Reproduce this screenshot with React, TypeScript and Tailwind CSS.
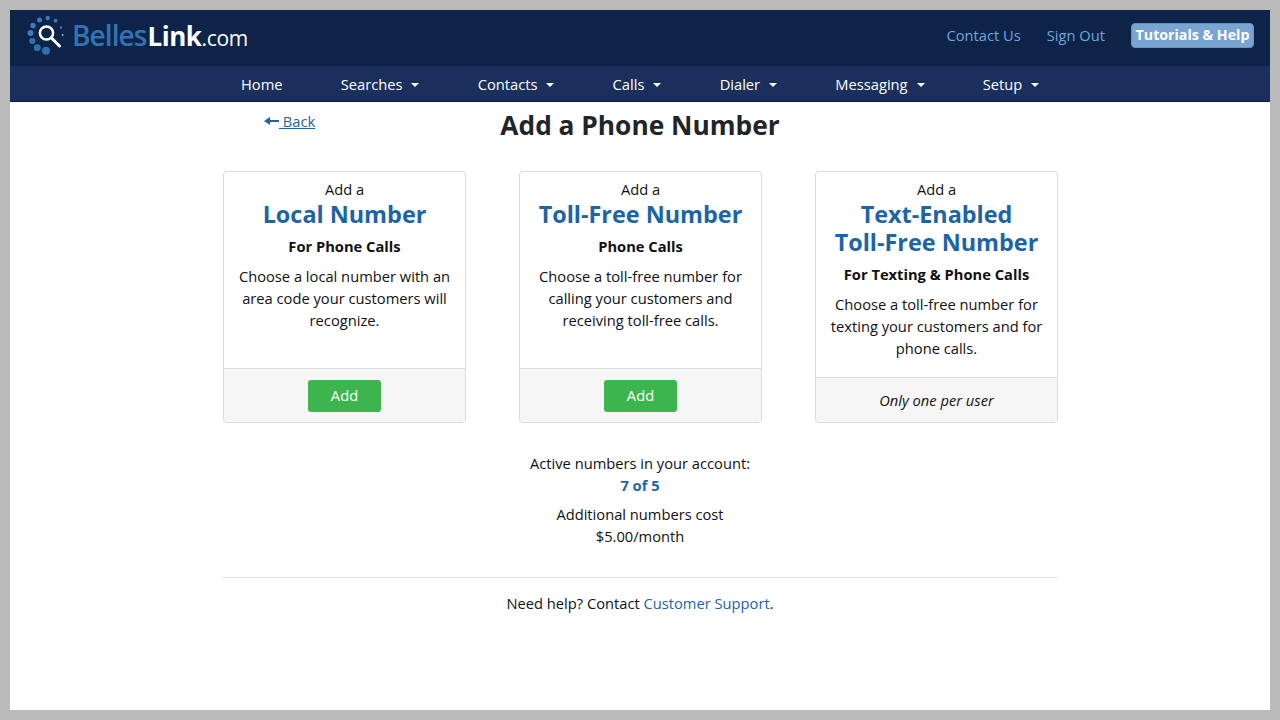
const font = { fontFamily: '"Open Sans", sans-serif' }

function Caret() {
  return <span className="inline-block ml-[9px] mb-[3px] align-middle w-0 h-0 border-x-[4px] border-x-transparent border-t-[4px] border-t-white" />
}

function Logo() {
  // page coordinates, the svg sits at x=27 y=14
  const dots: [number, number, number, string][] = [
    [47.7, 18, 2.2, "#3a7cbc"],
    [39.5, 20, 2.5, "#3a7cbc"],
    [55.5, 20.7, 1.9, "#3a7cbc"],
    [33, 25.5, 2.7, "#3a7cbc"],
    [30.5, 33, 3, "#3a7cbc"],
    [32.3, 41, 3.1, "#2f6fae"],
    [37.3, 47.7, 3.4, "#2f6fae"],
    [46, 50.7, 4, "#2f6fae"],
    [61, 27.5, 1.2, "#3a7cbc"],
    [62.7, 35, 1, "#7fb0dc"],
  ]
  return (
    <svg width="38" height="42" viewBox="27 14 38 42" className="shrink-0">
      {dots.map(([cx, cy, r, c], i) => (
        <circle key={i} cx={cx} cy={cy} r={r} fill={c} />
      ))}
      <circle cx="46.5" cy="33" r="6.6" fill="none" stroke="#fff" strokeWidth="2.5" />
      <path d="M51.5 38 L59.5 46" stroke="#fff" strokeWidth="3" strokeLinecap="round" />
    </svg>
  )
}

const cards = [
  {
    title: ["Local Number"],
    sub: "For Phone Calls",
    body: ["Choose a local number with an", "area code your customers will", "recognize."],
  },
  {
    title: ["Toll-Free Number"],
    sub: "Phone Calls",
    body: ["Choose a toll-free number for", "calling your customers and", "receiving toll-free calls."],
  },
  {
    title: ["Text-Enabled", "Toll-Free Number"],
    sub: "For Texting & Phone Calls",
    body: ["Choose a toll-free number for", "texting your customers and for", "phone calls."],
    note: "Only one per user",
  },
]

const nav = [
  { label: "Home", caret: false },
  { label: "Searches", caret: true },
  { label: "Contacts", caret: true },
  { label: "Calls", caret: true },
  { label: "Dialer", caret: true },
  { label: "Messaging", caret: true },
  { label: "Setup", caret: true },
]

export default function App() {
  return (
    <div style={font} className="h-[720px] bg-[#bababa] p-[10px] text-[#111] overflow-hidden">
      <div className="h-[700px] bg-white">
        {/* Header */}
        <div className="h-14 bg-[#0e2348] flex items-center justify-between pl-[17px] pr-[16px] pb-[6px]">
          <div className="flex items-center">
            <Logo />
            <span className="ml-[7px] leading-none whitespace-nowrap text-white">
              <span className="text-[28px] tracking-[-0.9px] font-semibold text-[#3274b3]">Belles</span>
              <span className="ml-[1px] text-[26px] tracking-[-0.5px] font-bold">Link</span>
              <span className="text-[21px] tracking-[-0.3px]">.com</span>
            </span>
          </div>
          <div className="flex items-center text-[14.7px]">
            <a className="text-[#6fa5d8]">Contact Us</a>
            <a className="text-[#6fa5d8] ml-[26px]">Sign Out</a>
            <a className="ml-[26px] h-[25px] w-[123px] rounded-[4px] bg-[#7aa5d2] border border-[#6f8fb3] text-white font-bold text-[14.2px] flex items-center justify-center">
              Tutorials &amp; Help
            </a>
          </div>
        </div>

        {/* Nav */}
        <div className="h-[36px] bg-[#1a2f5c] border-b border-[#0b1c3c] flex items-center gap-[58.2px] pl-[231px] pt-[2px] text-white text-[14.7px]">
          {nav.map(n => (
            <div key={n.label} className="whitespace-nowrap">
              {n.label}
              {n.caret && <Caret />}
            </div>
          ))}
        </div>

        {/* Main */}
        <div className="w-[836px] mx-auto relative">
          <a className="absolute left-[42px] top-[9px] text-[14.7px] leading-5 text-[#1d64a6] flex items-center">
            <svg width="15" height="10" viewBox="0 0 15 10" className="shrink-0">
              <path d="M0 5 L6 1 L6 4 L15 4 L15 6 L6 6 L6 9 Z" fill="#1d64a6" />
            </svg>
            <span className="underline whitespace-pre"> Back</span>
          </a>
          <h1 className="pt-[5px] text-center text-[26.3px] leading-[36px] font-bold text-[#212529]">Add a Phone Number</h1>

          <div className="mt-[28px] ml-[1px] grid grid-cols-[243px_243px_243px] gap-x-[53px] items-stretch">
            {cards.map(c => (
              <div key={c.sub} className="border border-[#dcdcdc] rounded-[4px] flex flex-col h-[252px] overflow-hidden">
                <div className="flex-1 px-3 pt-[7px] text-center text-[14.7px] leading-[22px]">
                  <div className="leading-[21px]">Add a</div>
                  {c.title.map(t => (
                    <div key={t} className="text-[23.4px] leading-[28px] font-bold text-[#1d64a6]">{t}</div>
                  ))}
                  <div className="mt-[7px] font-bold">{c.sub}</div>
                  <div className="mt-[8px]">
                    {c.body.map(l => (
                      <div key={l}>{l}</div>
                    ))}
                  </div>
                </div>
                {c.note ? (
                  <div className="h-[45px] bg-[#f6f6f6] border-t border-[#dcdcdc] flex items-center justify-center italic text-[14.7px]">
                    {c.note}
                  </div>
                ) : (
                  <div className="h-[54px] bg-[#f6f6f6] border-t border-[#dcdcdc] flex items-center justify-center">
                    <div className="w-[73px] h-[32px] rounded-[3px] bg-[#3cb54f] text-white text-[14.7px] flex items-center justify-center">Add</div>
                  </div>
                )}
              </div>
            ))}
          </div>

          <div className="mt-[29px] text-center text-[14.7px] leading-[22px]">
            <div>Active numbers in your account:</div>
            <div className="font-bold text-[#1d64a6]">7 of 5</div>
            <div className="mt-[7px]">Additional numbers cost</div>
            <div>$5.00/month</div>
          </div>

          <div className="mt-[30px] border-t border-[#e2e2e2] pt-[14px] text-center text-[14.7px] leading-[22px]">
            Need help? Contact <a className="text-[#1d64a6]">Customer Support</a>.
          </div>
        </div>
      </div>
    </div>
  )
}
